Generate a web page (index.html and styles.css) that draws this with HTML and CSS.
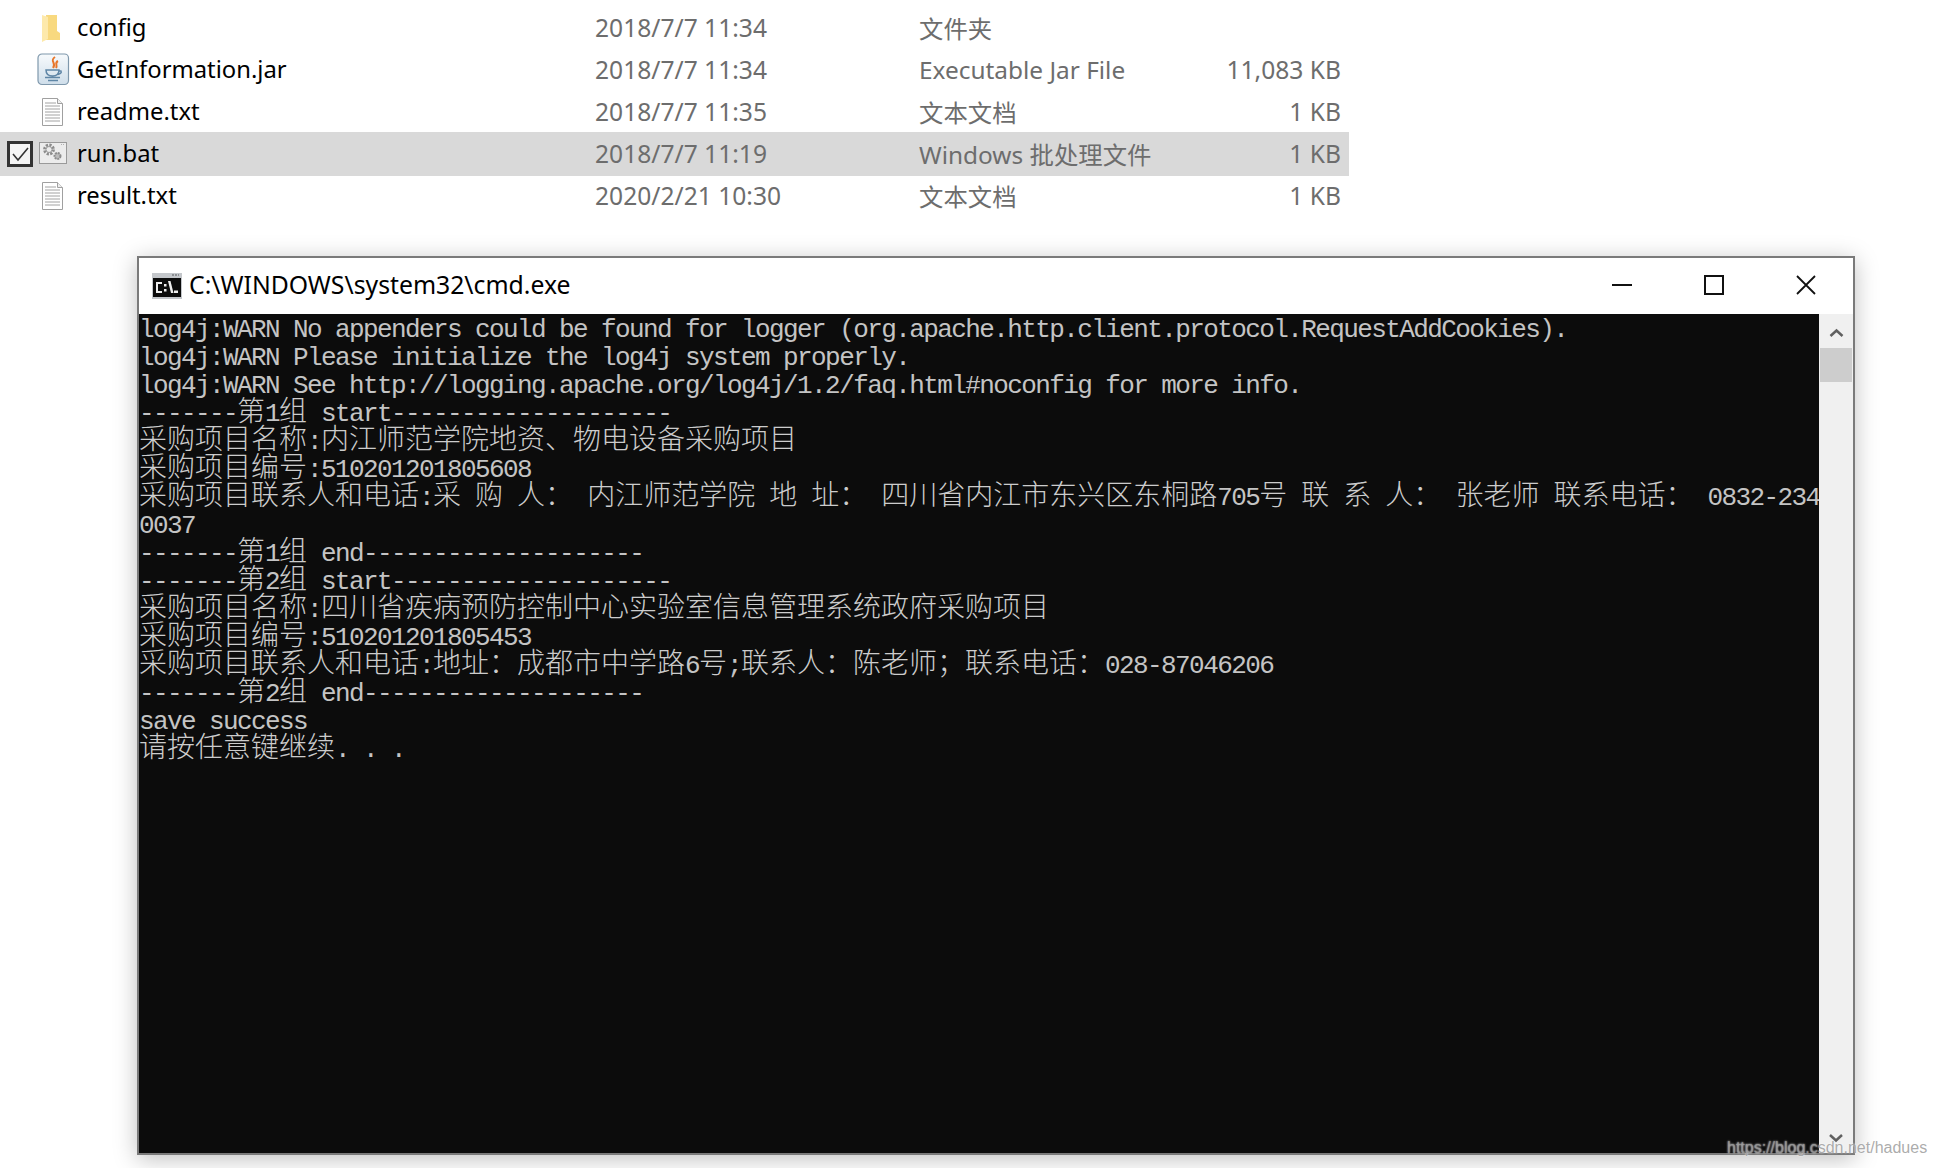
FILE: index.html
```html
<!DOCTYPE html>
<html lang="zh-CN">
<head>
<meta charset="utf-8">
<title>cmd.exe</title>
<link rel="stylesheet" href="styles.css">
</head>
<body>
<section class="files">
  <div class="row">
    <span class="check"></span>
    <span class="icon"><svg width="34" height="32" viewBox="0 0 34 32"><path d="M9 3h11v16l3 2v7H9z" fill="#f8d97f"/><path d="M5 3l6 2v22l-6 3z" fill="#fde9ab"/></svg></span>
    <span class="name">config</span><span class="date">2018/7/7 11:34</span><span class="type">文件夹</span><span class="size"></span>
  </div>
  <div class="row">
    <span class="check"></span>
    <span class="icon"><svg width="34" height="34" viewBox="0 0 34 34"><defs><linearGradient id="jarbg" x1="0" y1="0" x2="0" y2="1"><stop offset="0" stop-color="#f7fafc"/><stop offset="1" stop-color="#cfdeea"/></linearGradient></defs><rect x="1" y="1" width="30.500" height="30.500" rx="4" fill="url(#jarbg)" stroke="#7f98ac" stroke-width="1.200"/><path d="M18 4c-6 4 2 6-2 11M21 8c-4 2 0 4-2 7" fill="none" stroke="#e8762a" stroke-width="2"/><path d="M9 17h13c0 4-2 6-6.500 6S9 21 9 17zM22 18h2c1 2-1 3-3 3.500M8 24.500h15M11 27.500h10" fill="none" stroke="#5f86a6" stroke-width="1.500"/></svg></span>
    <span class="name">GetInformation.jar</span><span class="date">2018/7/7 11:34</span><span class="type">Executable Jar File</span><span class="size">11,083 KB</span>
  </div>
  <div class="row">
    <span class="check"></span>
    <span class="icon"><svg width="34" height="30" viewBox="0 0 34 30"><path d="M5.500 1.500h15l5 5v22h-20z" fill="#fff" stroke="#a0a0a0"/><path d="M20.500 1.500v5h5" fill="#eee" stroke="#a0a0a0"/><path d="M8 6h11M8 9h15M8 12h15M8 15h15M8 18h15M8 21h15M8 24h15" stroke="#a2a2a2"/></svg></span>
    <span class="name">readme.txt</span><span class="date">2018/7/7 11:35</span><span class="type">文本文档</span><span class="size">1 KB</span>
  </div>
  <div class="row selected">
    <span class="check checked"><svg width="20" height="20" viewBox="0 0 20 20"><path d="M3 10l5 6L18 4" fill="none" stroke="#333" stroke-width="1.600"/></svg></span>
    <span class="icon"><svg width="34" height="24" viewBox="0 0 34 24"><rect x="2.500" y="0.500" width="27" height="21" fill="#ececec" stroke="#9a9a9a"/><path d="M24 2.500h4" stroke="#b0b0b0" stroke-dasharray="1 1"/><circle cx="12" cy="7.500" r="4.500" fill="none" stroke="#8c8c8c" stroke-width="2.800" stroke-dasharray="2.200 1.300"/><circle cx="12" cy="7.500" r="3" fill="none" stroke="#9c9c9c"/><circle cx="20.500" cy="14" r="3" fill="#bbb" stroke="#8c8c8c" stroke-width="2" stroke-dasharray="2 .8"/></svg></span>
    <span class="name">run.bat</span><span class="date">2018/7/7 11:19</span><span class="type">Windows 批处理文件</span><span class="size">1 KB</span>
  </div>
  <div class="row">
    <span class="check"></span>
    <span class="icon"><svg width="34" height="30" viewBox="0 0 34 30"><path d="M5.500 1.500h15l5 5v22h-20z" fill="#fff" stroke="#a0a0a0"/><path d="M20.500 1.500v5h5" fill="#eee" stroke="#a0a0a0"/><path d="M8 6h11M8 9h15M8 12h15M8 15h15M8 18h15M8 21h15M8 24h15" stroke="#a2a2a2"/></svg></span>
    <span class="name">result.txt</span><span class="date">2020/2/21 10:30</span><span class="type">文本文档</span><span class="size">1 KB</span>
  </div>
</section>

<section class="window">
  <header class="titlebar">
    <svg class="appicon" width="30" height="26" viewBox="0 0 30 26"><rect width="30" height="26" fill="#c4c7cb"/><path d="M20 2h7" stroke="#8d9094" stroke-width="2" stroke-dasharray="2 1"/><rect x="1" y="5" width="28" height="19" fill="#0c0c0c"/><path d="M4 9h6v2H6v7h4v2H4zM12 11h2.500v2.500H12zM12 16h2.500v2.500H12zM16 8h2.500l3 12h-2.500zM22 17.500h4V20h-4z" fill="#eee"/></svg>
    <span class="wintitle">C:\WINDOWS\system32\cmd.exe</span>
    <span class="controls">
      <svg class="ctl" width="22" height="22" viewBox="0 0 22 22"><path d="M1 11h20" stroke="#111" stroke-width="2"/></svg>
      <svg class="ctl" width="22" height="22" viewBox="0 0 22 22"><rect x="2" y="2" width="18" height="18" fill="none" stroke="#111" stroke-width="2"/></svg>
      <svg class="ctl" width="22" height="22" viewBox="0 0 22 22"><path d="M2 2l18 18M20 2L2 20" stroke="#111" stroke-width="1.800"/></svg>
    </span>
  </header>
  <div class="body">
    <div class="console">
      <div class="line">log4j:WARN No appenders could be found for logger (org.apache.http.client.protocol.RequestAddCookies).</div>
      <div class="line">log4j:WARN Please initialize the log4j system properly.</div>
      <div class="line">log4j:WARN See http://logging.apache.org/log4j/1.2/faq.html#noconfig for more info.</div>
      <div class="line">-------<b>第</b>1<b>组</b> start--------------------</div>
      <div class="line"><b>采购项目名称</b>:<b>内江师范学院地资、物电设备采购项目</b></div>
      <div class="line"><b>采购项目编号</b>:510201201805608</div>
      <div class="line"><b>采购项目联系人和电话</b>:<b>采</b> <b>购</b> <b>人：</b> <b>内江师范学院</b> <b>地</b> <b>址：</b> <b>四川省内江市东兴区东桐路</b>705<b>号</b> <b>联</b> <b>系</b> <b>人：</b> <b>张老师</b> <b>联系电话：</b> 0832-234</div>
      <div class="line">0037</div>
      <div class="line">-------<b>第</b>1<b>组</b> end--------------------</div>
      <div class="line">-------<b>第</b>2<b>组</b> start--------------------</div>
      <div class="line"><b>采购项目名称</b>:<b>四川省疾病预防控制中心实验室信息管理系统政府采购项目</b></div>
      <div class="line"><b>采购项目编号</b>:510201201805453</div>
      <div class="line"><b>采购项目联系人和电话</b>:<b>地址：成都市中学路</b>6<b>号</b>;<b>联系人：陈老师；联系电话：</b>028-87046206</div>
      <div class="line">-------<b>第</b>2<b>组</b> end--------------------</div>
      <div class="line">save success</div>
      <div class="line"><b>请按任意键继续</b>. . .</div>
    </div>
    <aside class="scrollbar">
      <svg width="34" height="34" viewBox="0 0 34 34"><path d="M11.500 22l6-5.500 6 5.500" fill="none" stroke="#606060" stroke-width="2.500"/></svg>
      <div class="thumb"></div>
      <div class="track"></div>
      <svg width="34" height="34" viewBox="0 0 34 34"><path d="M11 16l6 5.500 6-5.500" fill="none" stroke="#606060" stroke-width="2.500"/></svg>
    </aside>
  </div>
</section>
<div class="watermark">https://blog.csdn.net/hadues</div>
</body>
</html>
```

FILE: styles.css
```css
html, body { margin: 0; height: 100%; background: #fff; overflow: hidden; }
body { position: relative; }

.files { padding-top: 7px; width: 1349px; font-family: "Noto Sans", "Noto Sans CJK SC", sans-serif; font-size: 24.6px; color: #000; }
.row { display: grid; grid-template-columns: 37px 40px 518px 324px 200px 1fr; align-items: center; height: 42px; white-space: nowrap; }
.name { font-size: 23.8px; margin-bottom: 2px; }
.date, .type, .size { color: #6d6d6d; margin-bottom: 2px; }
.type { font-size: 24.4px; }
.size { text-align: right; padding-right: 8px; }
.selected { background: #d9d9d9; height: 44px; margin: -1px 0; }
.check { display: flex; align-items: center; justify-content: center; }
.checked { width: 26px; height: 26px; margin-left: 7px; border: 3px solid #333; box-sizing: border-box; background: #f4f4f4; }
.icon { display: flex; align-items: center; }
.icon svg { display: block; }

.window { margin: 39px 0 0 137px; width: 1718px; height: 899px; box-sizing: border-box; border: 2px solid #7a7a7a; background: #fff; box-shadow: 0 4px 22px rgba(0,0,0,.25); display: flex; flex-direction: column; }
.titlebar { height: 56px; flex: none; display: flex; align-items: center; padding-left: 13px; }
.appicon { flex: none; margin-right: 7px; }
.wintitle { font-family: "Noto Sans", sans-serif; font-size: 24.75px; color: #000; margin-bottom: 4px; }
.controls { margin-left: auto; display: flex; gap: 70px; padding-right: 36px; margin-bottom: 2px; }
.ctl { display: block; }
.body { flex: 1; display: flex; min-height: 0; }
.console { flex: 1; background: #0c0c0c; color: #c4c4c4; font-family: "Liberation Mono", monospace; font-size: 26px; letter-spacing: -1.6px; overflow: hidden; padding-top: 2px; }
.line { height: 28px; line-height: 28px; white-space: pre; }
.line b { font-family: "Noto Sans CJK SC", sans-serif; font-weight: 300; font-size: 28px; letter-spacing: 0; line-height: 0; color: #cccccc; }
.scrollbar { width: 34px; flex: none; background: #f0f0f0; display: flex; flex-direction: column; }
.scrollbar svg { display: block; flex: none; }
.thumb { height: 34px; margin: 0 1px; background: #cdcdcd; flex: none; }
.track { flex: 1; }

.watermark { position: absolute; left: 1727px; top: 1139px; font-family: "Liberation Sans", sans-serif; font-size: 16px; color: rgba(150,150,150,.8); text-shadow: 0 0 2px #fff; }
```
